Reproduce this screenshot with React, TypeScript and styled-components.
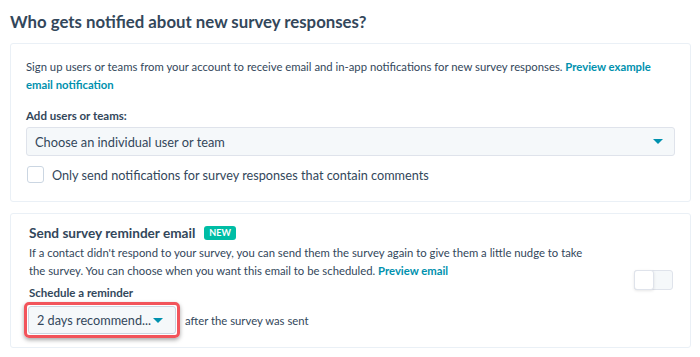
import React from "react";
import styled, { createGlobalStyle } from "styled-components";

const GlobalStyle = createGlobalStyle`
	html, body {
		margin: 0;
		padding: 0;
		background: #fff;
	}
	body {
		font-family: Lato, "Noto Sans", sans-serif;
		color: #33475b;
	}
`;

const App = () => {
	return (
		<>
			<GlobalStyle />
			<Page>
				<Title>Who gets notified about new survey responses?</Title>
				<Card>
					<Intro>
						Sign up users or teams from your account to receive email and in-app
						notifications for new survey responses. <Link>Preview example</Link>
						<br />
						<Link>email notification</Link>
					</Intro>
					<Label>Add users or teams:</Label>
					<Select>
						<span>Choose an individual user or team</span>
						<Caret />
					</Select>
					<CheckRow>
						<CheckBox />
						<CheckLabel>
							Only send notifications for survey responses that contain comments
						</CheckLabel>
					</CheckRow>
				</Card>
				<ReminderCard>
					<ReminderBody>
						<HeadRow>
							<SubTitle>Send survey reminder email</SubTitle>
							<Badge>NEW</Badge>
						</HeadRow>
						<Para>
							If a contact didn't respond to your survey, you can send them the
							survey again to give them a little nudge to take
							<br />
							the survey. You can choose when you want this email to be
							scheduled. <Link>Preview email</Link>
						</Para>
						<ScheduleLabel>Schedule a reminder</ScheduleLabel>
						<ScheduleRow>
							<Highlight>
								<SmallSelect>
									<span>2 days recommend...</span>
									<Caret />
								</SmallSelect>
							</Highlight>
							<After>after the survey was sent</After>
						</ScheduleRow>
					</ReminderBody>
					<Toggle>
						<Knob />
					</Toggle>
				</ReminderCard>
			</Page>
		</>
	);
};

export default App;

const Page = styled.div`
	width: 700px;
	height: 357px;
	padding: 11px 9px 0 10px;
	box-sizing: border-box;
	overflow: hidden;
`;

const Title = styled.h1`
	margin: 0 0 10px;
	font-size: 16.8px;
	font-weight: 700;
	line-height: 22px;
	color: #33475b;
`;

const Card = styled.div`
	border: 1px solid #eaf0f6;
	border-radius: 3px;
	padding: 14px 15px 18px 15px;
	height: 159px;
	box-sizing: border-box;
`;

const Intro = styled.p`
	margin: 0 0 14px;
	font-size: 11.3px;
	line-height: 18px;
	white-space: nowrap;
`;

const Link = styled.span`
	color: #0091ae;
	font-weight: 700;
`;

const Label = styled.div`
	font-size: 11.5px;
	font-weight: 700;
	line-height: 16px;
	margin-bottom: 3px;
`;

const Select = styled.div`
	height: 29px;
	box-sizing: border-box;
	background: #f5f8fa;
	border: 1px solid #dfe3eb;
	border-radius: 3px;
	display: flex;
	align-items: center;
	justify-content: space-between;
	padding: 0 11px 0 8px;
	font-size: 12.8px;
`;

const Caret = styled.span`
	width: 0;
	height: 0;
	border-left: 5px solid transparent;
	border-right: 5px solid transparent;
	border-top: 5px solid #0091ae;
`;

const CheckRow = styled.div`
	display: flex;
	align-items: center;
	gap: 8px;
	margin-top: 10px;
	padding-left: 1px;
`;

const CheckBox = styled.span`
	width: 15px;
	height: 15px;
	border: 1px solid #cbd6e2;
	border-radius: 3px;
	background: #fff;
`;

const CheckLabel = styled.span`
	font-size: 12.7px;
`;

const ReminderCard = styled.div`
	margin-top: 11px;
	border: 1px solid #eaf0f6;
	border-radius: 3px;
	height: 135px;
	box-sizing: border-box;
	display: flex;
	align-items: flex-start;
	justify-content: space-between;
	padding: 9px 17px 0 18px;
`;

const ReminderBody = styled.div`
	width: 580px;
`;

const HeadRow = styled.div`
	display: flex;
	align-items: center;
	gap: 9px;
`;

const SubTitle = styled.div`
	font-size: 13.6px;
	font-weight: 700;
	line-height: 20px;
`;

const Badge = styled.span`
	background: #00bda5;
	color: #fff;
	font-size: 9px;
	font-weight: 700;
	border-radius: 3px;
	padding: 2px 5px;
	line-height: 10px;
`;

const Para = styled.p`
	margin: 1px 0 5px;
	font-size: 11.3px;
	line-height: 18px;
	white-space: nowrap;
`;

const ScheduleLabel = styled.div`
	font-size: 11.5px;
	font-weight: 700;
	line-height: 16px;
	margin-bottom: 1px;
`;

const ScheduleRow = styled.div`
	display: flex;
	align-items: center;
	gap: 5px;
	margin-left: -5px;
`;

const Highlight = styled.div`
	border: 3px solid #f2545b;
	border-radius: 5px;
	padding: 1px;
	box-shadow: 0 2px 4px rgba(0, 0, 0, 0.35);
`;

const SmallSelect = styled.div`
	width: 148px;
	height: 28px;
	box-sizing: border-box;
	background: #f5f8fa;
	border: 1px solid #cbd6e2;
	border-radius: 3px;
	display: flex;
	align-items: center;
	justify-content: space-between;
	padding: 0 12px 0 8px;
	font-size: 12.7px;
	white-space: nowrap;
`;

const After = styled.span`
	font-size: 11.3px;
`;

const Toggle = styled.div`
	margin-top: 47px;
	width: 39px;
	height: 20px;
	box-sizing: border-box;
	border: 1px solid #dfe3eb;
	border-radius: 3px;
	background: #f5f8fa;
	position: relative;
`;

const Knob = styled.span`
	position: absolute;
	left: -1px;
	top: -1px;
	width: 20px;
	height: 20px;
	box-sizing: border-box;
	background: #fff;
	border: 1px solid #dfe3eb;
	border-radius: 3px;
	box-shadow: 0 1px 3px rgba(0, 0, 0, 0.1);
`;
